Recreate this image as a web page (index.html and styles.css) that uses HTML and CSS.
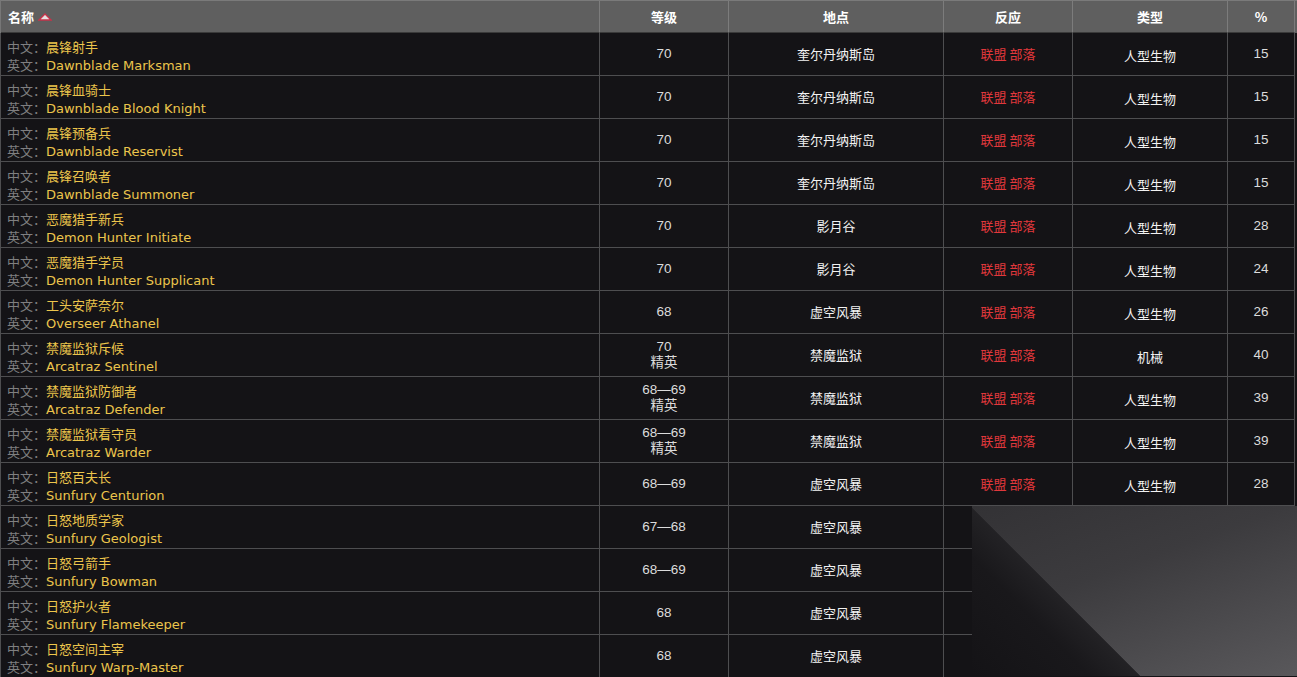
FILE: index.html
```html
<!DOCTYPE html>
<html lang="zh">
<head>
<meta charset="utf-8">
<title>NPC 列表</title>
<link rel="stylesheet" href="styles.css">
</head>
<body>
<div class="page">
  <div class="grid head">
    <div class="hc name-h">名称 <svg class="sort" width="14" height="8" viewBox="0 0 14 8"><polygon points="7,1 13,7 1,7" fill="#e6e0e0" stroke="#c8324a" stroke-width="1.3"/></svg></div>
    <div class="hc">等级</div>
    <div class="hc">地点</div>
    <div class="hc">反应</div>
    <div class="hc">类型</div>
    <div class="hc">%</div>
  </div>

  <div class="grid row">
    <div class="c name"><div><span class="lbl">中文：</span>晨锋射手</div><div><span class="lbl">英文：</span>Dawnblade Marksman</div></div>
    <div class="c lv">70</div><div class="c loc">奎尔丹纳斯岛</div><div class="c re">联盟 部落</div><div class="c ty">人型生物</div><div class="c pc">15</div>
  </div>
  <div class="grid row">
    <div class="c name"><div><span class="lbl">中文：</span>晨锋血骑士</div><div><span class="lbl">英文：</span>Dawnblade Blood Knight</div></div>
    <div class="c lv">70</div><div class="c loc">奎尔丹纳斯岛</div><div class="c re">联盟 部落</div><div class="c ty">人型生物</div><div class="c pc">15</div>
  </div>
  <div class="grid row">
    <div class="c name"><div><span class="lbl">中文：</span>晨锋预备兵</div><div><span class="lbl">英文：</span>Dawnblade Reservist</div></div>
    <div class="c lv">70</div><div class="c loc">奎尔丹纳斯岛</div><div class="c re">联盟 部落</div><div class="c ty">人型生物</div><div class="c pc">15</div>
  </div>
  <div class="grid row">
    <div class="c name"><div><span class="lbl">中文：</span>晨锋召唤者</div><div><span class="lbl">英文：</span>Dawnblade Summoner</div></div>
    <div class="c lv">70</div><div class="c loc">奎尔丹纳斯岛</div><div class="c re">联盟 部落</div><div class="c ty">人型生物</div><div class="c pc">15</div>
  </div>
  <div class="grid row">
    <div class="c name"><div><span class="lbl">中文：</span>恶魔猎手新兵</div><div><span class="lbl">英文：</span>Demon Hunter Initiate</div></div>
    <div class="c lv">70</div><div class="c loc">影月谷</div><div class="c re">联盟 部落</div><div class="c ty">人型生物</div><div class="c pc">28</div>
  </div>
  <div class="grid row">
    <div class="c name"><div><span class="lbl">中文：</span>恶魔猎手学员</div><div><span class="lbl">英文：</span>Demon Hunter Supplicant</div></div>
    <div class="c lv">70</div><div class="c loc">影月谷</div><div class="c re">联盟 部落</div><div class="c ty">人型生物</div><div class="c pc">24</div>
  </div>
  <div class="grid row">
    <div class="c name"><div><span class="lbl">中文：</span>工头安萨奈尔</div><div><span class="lbl">英文：</span>Overseer Athanel</div></div>
    <div class="c lv">68</div><div class="c loc">虚空风暴</div><div class="c re">联盟 部落</div><div class="c ty">人型生物</div><div class="c pc">26</div>
  </div>
  <div class="grid row">
    <div class="c name"><div><span class="lbl">中文：</span>禁魔监狱斥候</div><div><span class="lbl">英文：</span>Arcatraz Sentinel</div></div>
    <div class="c lv"><div>70</div><div>精英</div></div><div class="c loc">禁魔监狱</div><div class="c re">联盟 部落</div><div class="c ty">机械</div><div class="c pc">40</div>
  </div>
  <div class="grid row">
    <div class="c name"><div><span class="lbl">中文：</span>禁魔监狱防御者</div><div><span class="lbl">英文：</span>Arcatraz Defender</div></div>
    <div class="c lv"><div>68—69</div><div>精英</div></div><div class="c loc">禁魔监狱</div><div class="c re">联盟 部落</div><div class="c ty">人型生物</div><div class="c pc">39</div>
  </div>
  <div class="grid row">
    <div class="c name"><div><span class="lbl">中文：</span>禁魔监狱看守员</div><div><span class="lbl">英文：</span>Arcatraz Warder</div></div>
    <div class="c lv"><div>68—69</div><div>精英</div></div><div class="c loc">禁魔监狱</div><div class="c re">联盟 部落</div><div class="c ty">人型生物</div><div class="c pc">39</div>
  </div>
  <div class="grid row">
    <div class="c name"><div><span class="lbl">中文：</span>日怒百夫长</div><div><span class="lbl">英文：</span>Sunfury Centurion</div></div>
    <div class="c lv">68—69</div><div class="c loc">虚空风暴</div><div class="c re">联盟 部落</div><div class="c ty">人型生物</div><div class="c pc">28</div>
  </div>

  <div class="tail">
    <div class="tail-rows">
      <div class="grid trow">
        <div class="c name"><div><span class="lbl">中文：</span>日怒地质学家</div><div><span class="lbl">英文：</span>Sunfury Geologist</div></div>
        <div class="c lv">67—68</div><div class="c loc">虚空风暴</div><div class="c stub"></div>
      </div>
      <div class="grid trow">
        <div class="c name"><div><span class="lbl">中文：</span>日怒弓箭手</div><div><span class="lbl">英文：</span>Sunfury Bowman</div></div>
        <div class="c lv">68—69</div><div class="c loc">虚空风暴</div><div class="c stub"></div>
      </div>
      <div class="grid trow">
        <div class="c name"><div><span class="lbl">中文：</span>日怒护火者</div><div><span class="lbl">英文：</span>Sunfury Flamekeeper</div></div>
        <div class="c lv">68</div><div class="c loc">虚空风暴</div><div class="c stub"></div>
      </div>
      <div class="grid trow">
        <div class="c name"><div><span class="lbl">中文：</span>日怒空间主宰</div><div><span class="lbl">英文：</span>Sunfury Warp-Master</div></div>
        <div class="c lv">68</div><div class="c loc">虚空风暴</div><div class="c stub"></div>
      </div>
    </div>
    <div class="deco"></div>
  </div>
</div>
</body>
</html>
```

FILE: styles.css
```css
html, body {
  margin: 0;
  padding: 0;
  background: #141316;
}
.page {
  width: 1297px;
  height: 677px;
  overflow: hidden;
  background: #141316;
  font-family: "DejaVu Sans", "Noto Sans CJK SC", sans-serif;
  font-size: 13px;
  color: #e6e6e6;
}
.grid {
  display: grid;
  grid-template-columns: 599px 129px 215px 129px 155px 67px;
  border-left: 1px solid #4e4e50;
}
.head {
  height: 32px;
  background: #5f5f5f;
  border-top: 1px solid #7a7a7a;
  border-left-color: #777;
}
.hc {
  display: flex;
  align-items: center;
  justify-content: center;
  border-right: 1px solid #7c7c7c;
  border-bottom: 1px solid #3a3a3a;
  color: #fff;
  font-weight: bold;
  font-size: 13px;
  font-family: "Noto Sans CJK SC", "DejaVu Sans", sans-serif;
}
.hc.name-h {
  justify-content: flex-start;
  padding-left: 7px;
  gap: 4px;
}
.sort {
  display: block;
  margin-top: 1px;
}
.row, .trow {
  height: 43px;
}
.c {
  border-right: 1px solid #4e4e50;
  border-bottom: 1px solid #4e4e50;
  background: #141316;
  display: flex;
  flex-direction: column;
  align-items: center;
  justify-content: center;
  font-family: "Liberation Sans", "Noto Sans CJK SC", sans-serif;
  font-size: 13px;
  line-height: 16px;
}
.c.name {
  align-items: flex-start;
  justify-content: flex-start;
  padding: 5px 0 0 6px;
  line-height: 17px;
  font-family: "DejaVu Sans", "Noto Sans CJK SC", sans-serif;
  font-size: 13px;
  color: #ecc54c;
}
.lbl {
  color: #7f7f80;
  font-family: "Noto Sans CJK SC", sans-serif;
}
.c.lv {
  color: #dcdcdc;
  font-size: 13.5px;
}
.c.loc, .c.ty {
  color: #f2f2f2;
  font-family: "Noto Sans CJK SC", "Liberation Sans", sans-serif;
  font-size: 13px;
}
.c.ty {
  padding-top: 3px;
}
.c.re {
  color: #e0383c;
  font-family: "Noto Sans CJK SC", "Liberation Sans", sans-serif;
  font-size: 13px;
}
.c.pc {
  color: #dcdcdc;
  font-size: 13.5px;
}
.tail {
  display: flex;
}
.tail-rows {
  width: 972px;
  flex: none;
}
.trow {
  grid-template-columns: 599px 129px 215px 28px;
}
.c.stub {
  border-right: none;
}
.deco {
  flex: 1;
  height: 170px;
  background:
    linear-gradient(45deg, #141316 0%, #19181b 24%, #232225 33.9%, rgba(0,0,0,0) 34.1%),
    linear-gradient(160deg, #333235 0%, #3c3b3e 40%, #4d4c4f 75%, #59585b 100%);
}
```
